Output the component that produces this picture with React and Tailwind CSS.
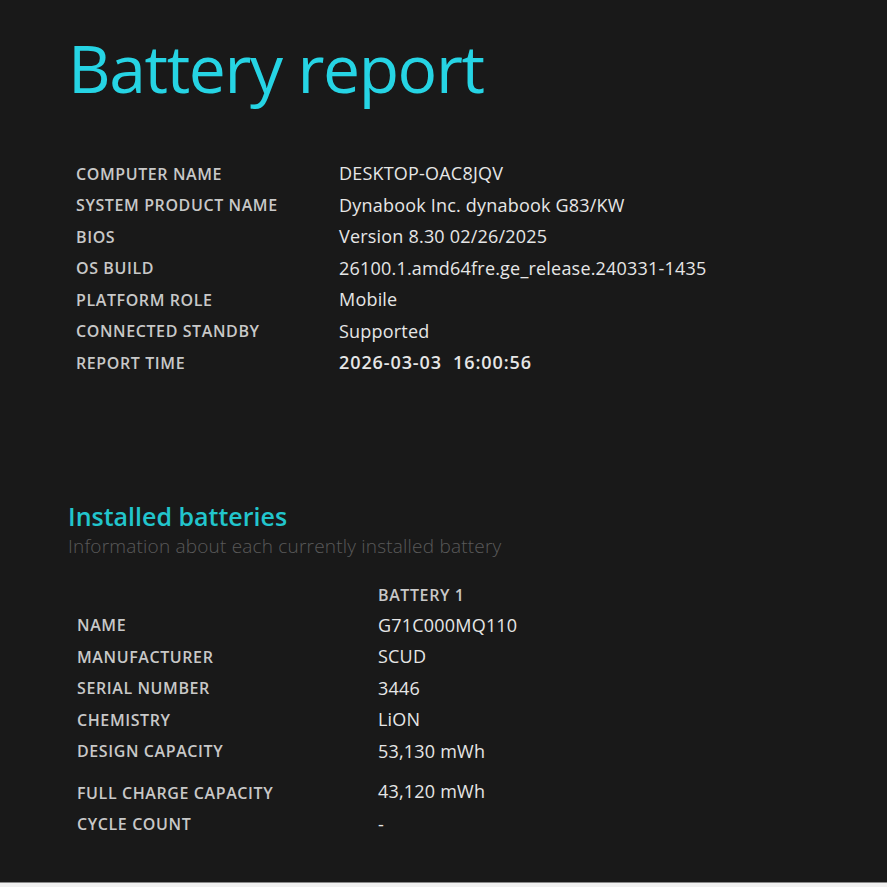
import React from 'react';

const systemInfo = [
  ['COMPUTER NAME', 'DESKTOP-OAC8JQV'],
  ['SYSTEM PRODUCT NAME', 'Dynabook Inc. dynabook G83/KW'],
  ['BIOS', 'Version 8.30 02/26/2025'],
  ['OS BUILD', '26100.1.amd64fre.ge_release.240331-1435'],
  ['PLATFORM ROLE', 'Mobile'],
  ['CONNECTED STANDBY', 'Supported'],
];

const batteryInfo = [
  ['NAME', 'G71C000MQ110'],
  ['MANUFACTURER', 'SCUD'],
  ['SERIAL NUMBER', '3446'],
  ['CHEMISTRY', 'LiON'],
  ['DESIGN CAPACITY', '53,130 mWh'],
];

const label = 'text-[16px] tracking-[0.6px] font-semibold text-[#c8c8c8] align-middle';
const value = 'text-[18px] tracking-[0.2px] text-[#e6e6e6] align-middle';

const App = () => {
  return (
    <div className="w-[887px] h-[887px] overflow-hidden bg-[#f0f0f0] font-['Open_Sans',sans-serif]">
      <div className="h-[883px] bg-[#191919] border-b border-[#8a8a8a] pl-[68px]">
        <h1 className="pt-[27px] text-[66px] leading-[80px] text-[#26d4e4] tracking-[-1.4px]">
          Battery report
        </h1>

        <table className="mt-[51px] ml-[8px] border-collapse">
          <tbody>
            {systemInfo.map(([k, v]) => (
              <tr key={k} className="h-[31.5px]">
                <td className={`w-[263px] ${label}`}>{k}</td>
                <td className={value}>{v}</td>
              </tr>
            ))}
            <tr className="h-[31.5px]">
              <td className={`w-[263px] ${label}`}>REPORT TIME</td>
              <td className="text-[18px] font-semibold tracking-[0.9px] text-[#e6e6e6] align-middle whitespace-pre">2026-03-03  16:00:56</td>
            </tr>
          </tbody>
        </table>

        <h2 className="mt-[122px] text-[25px] leading-[30px] font-semibold text-[#22c5cc]">Installed batteries</h2>
        <p className="mt-[3px] text-[19px] tracking-[0.2px] leading-[24px] font-light text-[#5a5a5a]">Information about each currently installed battery</p>

        <table className="mt-[22px] ml-[9px] border-collapse">
          <tbody>
            <tr className="h-[30px]">
              <td className="w-[301px]"></td>
              <td className={label}>BATTERY 1</td>
            </tr>
            {batteryInfo.map(([k, v]) => (
              <tr key={k} className="h-[31.5px]">
                <td className={label}>{k}</td>
                <td className={value}>{v}</td>
              </tr>
            ))}
            <tr className="h-[42px]">
              <td className={`${label} !align-bottom pb-[4px]`}>FULL CHARGE CAPACITY</td>
              <td className={`${value} !align-bottom pb-[4px]`}>43,120 mWh</td>
            </tr>
            <tr className="h-[30px]">
              <td className={label}>CYCLE COUNT</td>
              <td className={value}>-</td>
            </tr>
          </tbody>
        </table>
      </div>
    </div>
  );
};

export default App;
